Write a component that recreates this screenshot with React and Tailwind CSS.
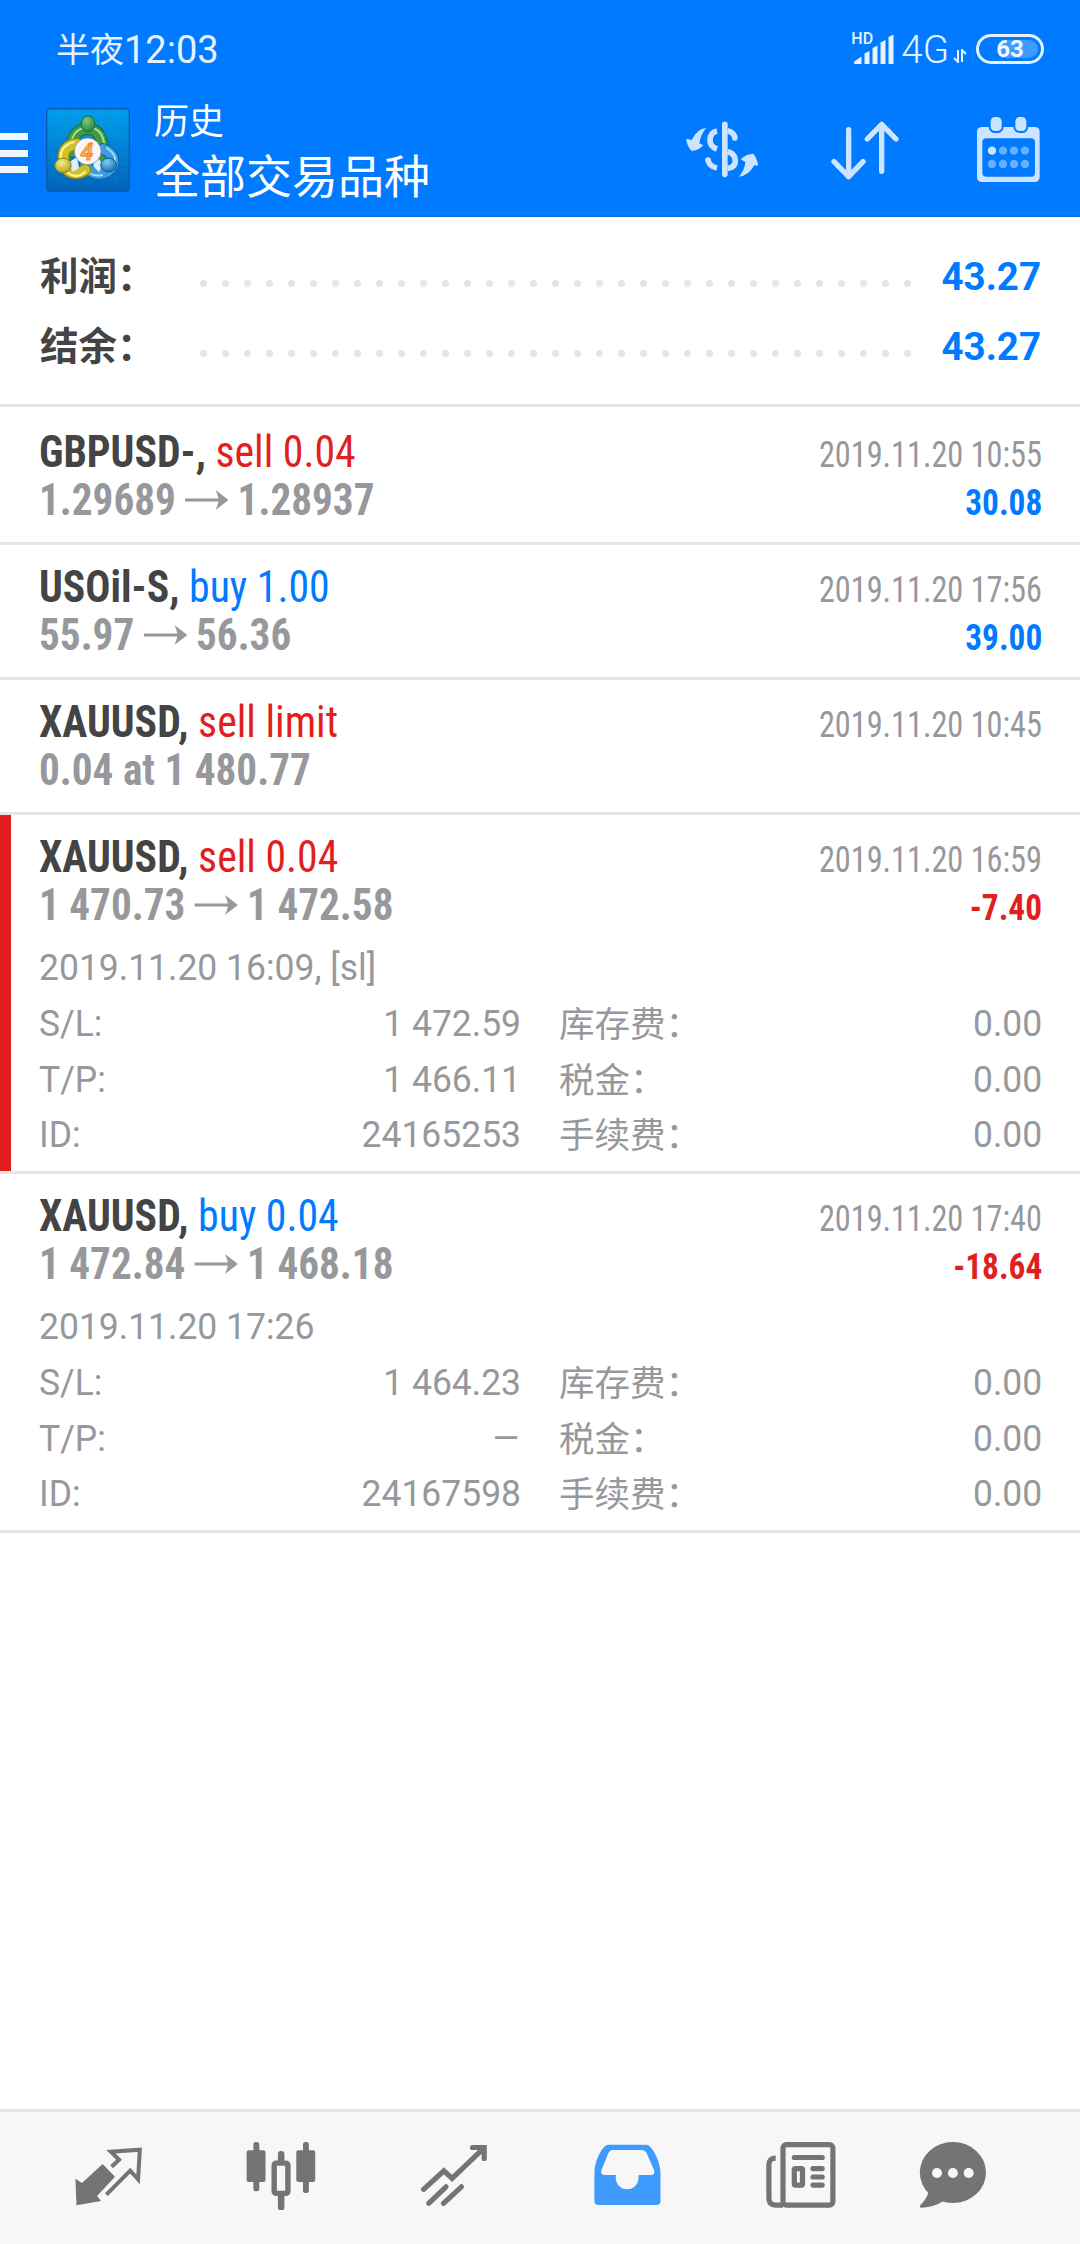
const BLUE = 'text-[#007aff]';
const RED = 'text-[#e11f1f]';

const orders = [
  { symbol: 'GBPUSD-', type: 'sell 0.04', side: 'sell', from: '1.29689', to: '1.28937', time: '2019.11.20 10:55', profit: '30.08' },
  { symbol: 'USOil-S', type: 'buy 1.00', side: 'buy', from: '55.97', to: '56.36', time: '2019.11.20 17:56', profit: '39.00' },
  { symbol: 'XAUUSD', type: 'sell limit', side: 'sell', note: '0.04 at 1 480.77', time: '2019.11.20 10:45' },
  {
    symbol: 'XAUUSD', type: 'sell 0.04', side: 'sell', from: '1 470.73', to: '1 472.58', time: '2019.11.20 16:59', profit: '-7.40', marked: true,
    details: { opened: '2019.11.20 16:09, [sl]', sl: '1 472.59', tp: '1 466.11', id: '24165253' },
  },
  {
    symbol: 'XAUUSD', type: 'buy 0.04', side: 'buy', from: '1 472.84', to: '1 468.18', time: '2019.11.20 17:40', profit: '-18.64',
    details: { opened: '2019.11.20 17:26', sl: '1 464.23', tp: '–', id: '24167598' },
  },
];

function Signal() {
  return (
    <svg viewBox="0 0 42 30" className="h-[30px] w-[42px]" fill="#e6f2ff">
      <path d="M1 29.500Q0 28 2 27L8.500 22.500V30H2Z" />
      <path d="M11.500 19.500L16.500 17V30H11.500Z" />
      <path d="M19.500 14L24.500 11.500V30H19.500Z" />
      <path d="M27.500 8.500L32.500 6V30H27.500Z" />
      <path d="M35.500 3L40.500 0.500V30H35.500Z" />
    </svg>
  );
}

function Logo() {
  return (
    <svg viewBox="0 0 84 84" className="h-[84px] w-[84px]">
      <defs>
        <linearGradient id="bg" x1="0" y1="0" x2="0" y2="1">
          <stop offset="0" stopColor="#009eec" />
          <stop offset="1" stopColor="#0064bb" />
        </linearGradient>
        <radialGradient id="green" cx="0.4" cy="0.3" r="0.8">
          <stop offset="0" stopColor="#7cc87c" />
          <stop offset="1" stopColor="#1c7a34" />
        </radialGradient>
        <radialGradient id="yellow" cx="0.4" cy="0.3" r="0.8">
          <stop offset="0" stopColor="#f4f08a" />
          <stop offset="1" stopColor="#a89a10" />
        </radialGradient>
        <radialGradient id="sky" cx="0.4" cy="0.3" r="0.8">
          <stop offset="0" stopColor="#7fd0f5" />
          <stop offset="1" stopColor="#0a5fa8" />
        </radialGradient>
      </defs>
      <rect x="0.7" y="0.7" width="82.600" height="82.600" rx="3.500" fill="url(#bg)" stroke="#0a5cab" strokeWidth="1.400" />
      <path d="M15 1V83M28 1V83M56 1V83M69 1V83M1 15H83M1 28H83M1 56H83M1 69H83" stroke="#fff" strokeOpacity="0.05" />
      <g fill="none" strokeLinecap="round">
        <path d="M27 44C23 26 34 21 42 21C50 21 59 27 56 49" stroke="#1b6b2e" strokeWidth="12" />
        <path d="M27 44C23 26 34 21 42 21C50 21 59 27 56 49" stroke="#3f9a45" strokeWidth="10" />
        <path d="M25 36C26 26 32 21 38 20M47 20C55 23 59 30 58 42" stroke="#a5dc9f" strokeWidth="2" />
        <path d="M57 41C65 44 69 50 67 57C61 68 47 69 39 58" stroke="#0d5ba3" strokeWidth="12" />
        <path d="M57 41C65 44 69 50 67 57C61 68 47 69 39 58" stroke="#3c9edc" strokeWidth="10" />
        <path d="M61 40C68 45 70 49 69 53M56 67C48 69 42 65 38 60" stroke="#a6dcf6" strokeWidth="2" />
        <path d="M31 36C19 37 16 45 18 54C20 67 32 67 39 62" stroke="#8b8010" strokeWidth="12" />
        <path d="M31 36C19 37 16 45 18 54C20 67 32 67 39 62" stroke="#cdc326" strokeWidth="10" />
        <path d="M28 34C17 37 14 44 15 51M22 65C28 70 35 68 39 64" stroke="#f8f49a" strokeWidth="2.200" />
      </g>
      <path d="M22 55L31 49L33 60L27 64ZM57 56L51 49L47 58L53 64Z" fill="#dfeefa" />
      <ellipse cx="42" cy="16" rx="7" ry="8" fill="url(#green)" stroke="#1c7030" />
      <ellipse cx="17" cy="57.500" rx="8.200" ry="7.300" fill="url(#yellow)" stroke="#8f8410" />
      <ellipse cx="62.500" cy="57" rx="7.800" ry="7" fill="url(#sky)" stroke="#0d5d9f" />
      <circle cx="41.700" cy="43.300" r="13.300" fill="#f6f6f8" stroke="#8e8e8e" strokeWidth="0.800" />
      <text x="41" y="51.500" textAnchor="middle" fill="#fbb45c" stroke="#ee8420" strokeWidth="0.800" className="font-[Roboto] text-[23px] font-bold italic">4</text>
    </svg>
  );
}

function CurrencyIcon() {
  return (
    <svg viewBox="132 360 228 174" className="h-[58px] w-[76px]" fill="none" stroke="#cce4ff" strokeWidth="17">
      <path d="M254.500 373V523" strokeLinecap="round" />
      <path d="M231 393Q210 398 210 420Q210 440 231 447M231 504Q208 500 204 480" />
      <path d="M263 392Q280 396 285 412M263 454Q286 462 286 483Q286 502 263 505" />
      <circle cx="204" cy="480" r="8.500" fill="#cce4ff" stroke="none" />
      <circle cx="284.500" cy="414" r="8.500" fill="#cce4ff" stroke="none" />
      <path d="M198 384Q172 386 155 420L138 416Q142 440 155 453Q175 452 190 436L178 430Q182 404 198 384Z" fill="#cce4ff" stroke="none" />
      <path d="M297 530Q325 528 343 496L354 497Q353 478 340 461Q318 462 302 478L316 486Q314 510 297 530Z" fill="#cce4ff" stroke="none" />
    </svg>
  );
}

function SortIcon() {
  return (
    <svg viewBox="570 360 210 183" className="h-[61px] w-[70px]" fill="none" stroke="#cce4ff" strokeWidth="16" strokeLinecap="round" strokeLinejoin="round">
      <path d="M626 389V530M582 485L626 530L669 485" />
      <path d="M725 514V373M682 417L725 373L768 417" />
    </svg>
  );
}

function CalendarIcon() {
  return (
    <svg viewBox="1008 348 195 201" className="h-[67px] w-[65px]" fill="#cce4ff">
      <rect x="1011" y="381" width="188" height="165" rx="14" />
      <rect x="1027" y="415" width="158" height="115" rx="12" fill="#007aff" />
      <rect x="1049" y="348" width="39" height="48" rx="16" stroke="#007aff" strokeWidth="6" />
      <rect x="1123" y="348" width="39" height="48" rx="16" stroke="#007aff" strokeWidth="6" />
      {[1056, 1089, 1122, 1155].map(x => (
        <g key={x}>
          <circle cx={x} cy="452" r="12.500" fill={x === 1056 ? '#cce4ff' : '#66b0ff'} />
          <circle cx={x} cy="492" r="12.500" fill="#66b0ff" />
        </g>
      ))}
    </svg>
  );
}

function Header() {
  return (
    <header className="h-[217px] border-b-2 border-[#006fe8] bg-[#007aff]">
      <div className="flex h-[92px] items-center pt-[6px] pr-[36px] pl-[56px] text-[#e6f2ff]">
        <div className="flex flex-1 items-center">
          <span className="mb-[3px] font-['Noto_Sans_CJK_SC',sans-serif] text-[34px]">半夜</span>
          <span className="mt-[3px] font-[Roboto] text-[38px]">12:03</span>
        </div>
        <div className="relative mr-[6px]">
          <Signal />
          <span className="absolute -top-[3px] -left-[2px] font-[Roboto] text-[16px] leading-[16px] font-medium">HD</span>
        </div>
        <span className="mt-[2px] font-[Roboto] text-[38.500px] font-[350]">4G</span>
        <svg viewBox="0 0 14 14" className="mt-[14px] ml-[4px] h-[14px] w-[14px]" fill="none" stroke="#e6f2ff" strokeWidth="2">
          <path d="M5 1V13L1 9M9 13V1L13 5" />
        </svg>
        <div className="relative ml-[9px] flex h-[30px] w-[68px] items-center justify-end rounded-full border-[3px] border-[#e6f2ff] p-[3px]">
          <div className="h-full w-[37px] rounded-r-full bg-[#409bff]" />
          <span className="absolute inset-0 text-center font-[Roboto] text-[24px] leading-[25px] font-bold text-[#f2f8ff]">63</span>
        </div>
      </div>
      <div className="flex pt-[4px]">
        <div className="mt-[37px] flex h-[40px] w-[28px] flex-col justify-between">
          <div className="h-[7px] bg-[#f0f7ff]" />
          <div className="h-[7px] bg-[#f0f7ff]" />
          <div className="h-[7px] bg-[#f0f7ff]" />
        </div>
        <div className="mt-[12px] ml-[18px]"><Logo /></div>
        <div className="-mt-[1px] ml-[24px] flex-1 font-['Noto_Sans_CJK_SC',sans-serif] text-white">
          <div className="h-[48px] text-[35px] leading-[48px]">历史</div>
          <div className="h-[62px] text-[46px] leading-[61px]">全部交易品种</div>
        </div>
        <div className="mt-[24px] mr-[70px]"><CurrencyIcon /></div>
        <div className="mt-[24px] mr-[76px]"><SortIcon /></div>
        <div className="mt-[20px] mr-[39px]"><CalendarIcon /></div>
      </div>
    </header>
  );
}

function SummaryRow({ label, value }) {
  return (
    <div className="flex h-[70px] items-center">
      <span className="mb-[4px] w-[160px] font-['Noto_Sans_CJK_SC',sans-serif] text-[38.500px] font-bold whitespace-nowrap text-[#444]">{label}</span>
      <div className="mt-[14px] flex w-[711px] justify-between">
        {Array.from({ length: 33 }, (_, i) => (
          <span key={i} className="h-[7px] w-[7px] rounded-full bg-[#e5e5e5]" />
        ))}
      </div>
      <span className={`mt-[2px] flex-1 text-right text-[38.500px] font-bold ${BLUE}`}>{value}</span>
    </div>
  );
}

function Arrow() {
  return (
    <svg viewBox="0 0 46 22" preserveAspectRatio="none" className="mr-[9px] ml-[10px] h-[22px] w-[47px]" fill="#97989c">
      <path d="M0 9.500H35Q34 5 32 1L45.500 11L32 21Q34 17 35 12.500H0Z" />
    </svg>
  );
}

function OrderRow({ order }) {
  const { details } = order;
  return (
    <div className={`border-b-[3px] border-[#e5e5e5] ${details ? 'h-[359px]' : 'h-[135px]'}`}>
      <div className={`h-full border-l-[11px] pt-[18px] pr-[38px] pl-[28px] ${order.marked ? 'border-[#e11f1f]' : 'border-transparent'}`}>
        <div className="flex h-[48px] items-baseline justify-between leading-[48px] [font-stretch:75%]">
          <div className="origin-left scale-x-[0.949] text-[44px] whitespace-pre">
            <b className="text-[#444]">{order.symbol}, </b>
            <span className={order.side === 'buy' ? BLUE : RED}>{order.type}</span>
          </div>
          <div className="origin-right scale-x-[0.896] text-[36px] text-[#97989c]">{order.time}</div>
        </div>
        <div className="flex h-[48px] items-baseline justify-between leading-[48px] font-bold [font-stretch:75%]">
          <div className="flex origin-left scale-x-[0.936] items-center text-[44px] text-[#97989c]">
            {order.note || <>{order.from}<Arrow />{order.to}</>}
          </div>
          {order.profit && (
            <div className={`origin-right scale-x-[0.925] text-[36px] ${order.profit.startsWith('-') ? RED : BLUE}`}>{order.profit}</div>
          )}
        </div>
        {details && (
          <div className="text-[36px] text-[#97989c]">
            <div className="mt-[11px] h-[57px] origin-left scale-x-[0.986] leading-[56px]">{details.opened}</div>
            {[
              ['S/L:', details.sl, '库存费：'],
              ['T/P:', details.tp, '税金：'],
              ['ID:', details.id, '手续费：'],
            ].map(([left, value, right]) => (
              <div key={left} className="flex h-[55.500px] leading-[55.500px]">
                <span className="w-[120px] origin-left scale-x-[0.985]">{left}</span>
                <span className={`w-[362px] origin-right text-right ${value === '–' ? 'scale-x-[1.25]' : 'scale-x-[0.985]'}`}>{value}</span>
                <span className="ml-[38px] flex-1 font-['Noto_Sans_CJK_SC',sans-serif] text-[35.500px] leading-[49px]">{right}</span>
                <span className="origin-right scale-x-[0.985]">0.00</span>
              </div>
            ))}
          </div>
        )}
      </div>
    </div>
  );
}

function NavBar() {
  const icon = 'h-[72px] w-[72px]';
  return (
    <nav className="flex h-[135px] border-t-[3px] border-[#e5e5e5] bg-[#f7f7f7] pt-[28px] pl-[72px] text-[#747474]">
      <svg viewBox="0 0 72 72" className={icon}>
        <path d="M30.600 24L43 36.700L25.100 56L29 61L4.500 65.300L3.400 38.700L10 43Z" fill="currentColor" />
        <path d="M39.600 26.700L47.100 19.700L38.900 11.700L67.800 9.700L66.100 39.300L58.200 30.700L34.400 54.700" fill="none" stroke="currentColor" strokeWidth="4" />
      </svg>
      <svg viewBox="0 0 72 72" className={`ml-[101px] ${icon}`} fill="currentColor">
        <rect x="1.600" y="10.300" width="18.900" height="31.700" rx="2" />
        <rect x="8.400" y="2" width="5.900" height="49.300" rx="2.500" />
        <rect x="32.900" y="11" width="6.500" height="12" rx="3" />
        <rect x="32.900" y="54" width="6.500" height="16" rx="2" />
        <rect x="29.200" y="23.100" width="13.700" height="30.300" rx="2" fill="none" stroke="currentColor" strokeWidth="5.400" />
        <rect x="51.300" y="10.300" width="18.900" height="31.700" rx="2" />
        <rect x="58" y="2" width="5.900" height="51" rx="2.500" />
      </svg>
      <svg viewBox="0 0 72 72" className={`ml-[102px] ${icon}`} fill="none" stroke="currentColor" strokeWidth="5.200" strokeLinecap="round">
        <path d="M4.600 49.300L24.900 30.800L33.100 38.400L64 8.800" />
        <path d="M53.500 7.500H65.200V18.500" />
        <path d="M27 46.800L9.700 63.300M42.400 46.800L24.500 63.300" />
      </svg>
      <svg viewBox="0 0 72 72" className={`ml-[101px] ${icon}`} fill="#409bff">
        <path fillRule="evenodd" d="M16.500 4.700H54.500C60 4.700 68.500 22 68.500 33V61Q68.500 65 64.500 65H6.500Q2.400 65 2.400 61V33C2.400 22 10 4.700 16.500 4.700ZM21 10H49Q53.500 10 55 14L62 30Q63.500 35 59 35H46.500V38A11.300 11.300 0 0 1 23.800 38V35H13Q8 35 9.500 30L16 14Q17.500 10 21 10Z" />
      </svg>
      <svg viewBox="0 0 72 72" className={`ml-[101px] ${icon}`} fill="none" stroke="currentColor" strokeWidth="5.200">
        <rect x="18" y="4.600" width="49.900" height="60.500" rx="3.500" />
        <path d="M10.700 18.200Q3.900 18.200 3.900 25V58Q3.900 65.100 10.500 65.100H18" />
        <rect x="29.300" y="28.600" width="8.200" height="16.500" rx="1" />
        <path strokeLinecap="round" d="M29.300 17.500H57.200M48 28.600H57.200M48 37H57.200M48 45.100H57.200" />
      </svg>
      <svg viewBox="0 0 72 72" className={`ml-[80px] ${icon}`} fill="currentColor">
        <ellipse cx="35.900" cy="32.500" rx="33.100" ry="30.500" />
        <path d="M11.400 50Q11.500 57 3.500 65Q1.500 67.800 5 67.700Q17 67 26.600 61Z" />
        <g fill="#f7f7f7">
          <circle cx="20" cy="33" r="5" />
          <circle cx="35.900" cy="33" r="5" />
          <circle cx="51.700" cy="33" r="5" />
        </g>
      </svg>
    </nav>
  );
}

export default function App() {
  return (
    <div className="flex h-[2244px] w-[1080px] flex-col bg-white font-[Roboto,sans-serif]">
      <Header />
      <div className="h-[190px] border-b-[3px] border-[#e5e5e5] pt-[24px] pr-[39px] pl-[40px]">
        <SummaryRow label="利润：" value="43.27" />
        <SummaryRow label="结余：" value="43.27" />
      </div>
      <div className="flex-1 pt-[3px]">
        {orders.map((order, i) => (
          <OrderRow key={i} order={order} />
        ))}
      </div>
      <NavBar />
    </div>
  );
}
